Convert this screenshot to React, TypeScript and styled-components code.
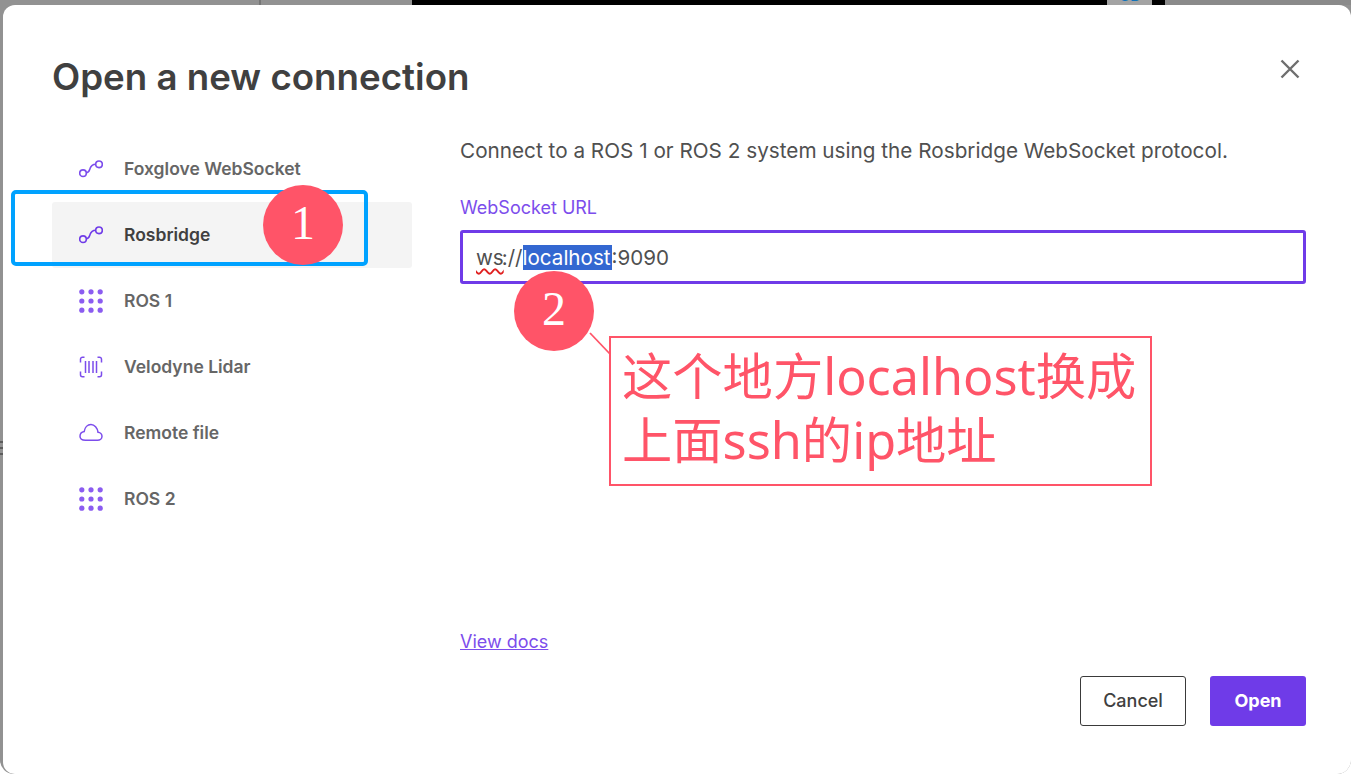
import React, { FC } from 'react';
import styled, { createGlobalStyle } from 'styled-components';

const GlobalStyle = createGlobalStyle`
    html, body {
        margin: 0;
        padding: 0;
        background: #fff;
    }

    * {
        box-sizing: border-box;
    }
`;

const ConnectionIcon: FC = () => (
    <svg width="24" height="24" viewBox="0 0 24 24" fill="none" stroke="currentColor" strokeWidth="1.6">
        <circle cx="4" cy="16.2" r="3.3" />
        <circle cx="20" cy="7.3" r="3.3" />
        <path d="M7.3 15.6C10 15.6 10.3 13.4 11 11.6C11.8 9.4 13.4 7.4 16.7 7.3" />
    </svg>
);

const DotsIcon: FC = () => (
    <svg width="24" height="24" viewBox="0 0 24 24" fill="#8b5cf0">
        {[2.8, 12, 21.2].map((y) =>
            [2.8, 12, 21.2].map((x) => <circle key={`${x}-${y}`} cx={x} cy={y} r="2.6" />)
        )}
    </svg>
);

const LidarIcon: FC = () => (
    <svg width="24" height="24" viewBox="0 0 24 24" fill="none" stroke="currentColor" strokeWidth="1.5">
        <path d="M5.5 2.2H3.5A2 2 0 0 0 1.5 4.2V7.5M18.5 2.2H20.5A2 2 0 0 1 22.5 4.2V7.5M5.5 21.8H3.5A2 2 0 0 1 1.5 19.8V16.5M18.5 21.8H20.5A2 2 0 0 0 22.5 19.8V16.5" />
        <path d="M6.5 6V18M10 6V18M14 6V18M17.5 6V18" />
    </svg>
);

const CloudIcon: FC = () => (
    <svg width="24" height="24" viewBox="0 0 24 24" fill="none" stroke="currentColor" strokeWidth="1.5">
        <path d="M6.5 19.2H18.5C21 19.2 23 17.5 23 15.2C23 13 21.2 11.3 19 11.2C18.4 7 15.5 3.5 12 3.5C8.5 3.5 5.8 6.5 5.2 10.5C2.8 11 1 12.8 1 15.2C1 17.5 3.2 19.2 6.5 19.2Z" />
    </svg>
);

const connections = [
    { name: 'Foxglove WebSocket', icon: <ConnectionIcon /> },
    { name: 'Rosbridge', icon: <ConnectionIcon />, active: true },
    { name: 'ROS 1', icon: <DotsIcon /> },
    { name: 'Velodyne Lidar', icon: <LidarIcon /> },
    { name: 'Remote file', icon: <CloudIcon /> },
    { name: 'ROS 2', icon: <DotsIcon /> },
];

const App: FC = () => (
    <Backdrop>
        <GlobalStyle />

        <TopStrip>
            <StripPiece $width={259} $color="#929292" />
            <StripPiece $width={2} $color="#767676" />
            <StripPiece $width={151} $color="#929292" />
            <StripPiece $width={695} $color="#000" />
            <StripPiece $width={45} $color="#a3a3a3"><StripLabel>3D</StripLabel></StripPiece>
            <StripPiece $width={13} $color="#000" />
            <StripPiece $width={186} $color="#8a8a8a" />
        </TopStrip>

        <EdgeTicks />

        <Dialog>
            <Header>
                <Title>Open a new connection</Title>
                <CloseButton aria-label="Close">
                    <svg width="20" height="20" viewBox="0 0 20 20" stroke="#6e6e6e" strokeWidth="2.4">
                        <path d="M1.5 1.5L18.5 18.5M18.5 1.5L1.5 18.5" />
                    </svg>
                </CloseButton>
            </Header>

            <Body>
                <Sidebar>
                    {connections.map((item) => (
                        <SidebarItem key={item.name} $active={item.active}>
                            {item.icon}
                            <span>{item.name}</span>
                        </SidebarItem>
                    ))}
                </Sidebar>

                <Panel>
                    <Description>
                        Connect to a ROS 1 or ROS 2 system using the Rosbridge WebSocket protocol.
                    </Description>
                    <FieldLabel>WebSocket URL</FieldLabel>
                    <UrlField>
                        <Misspelled>ws</Misspelled>://<Selected>localhost</Selected>:9090
                    </UrlField>

                    <DocsLink href="#">View docs</DocsLink>

                    <Actions>
                        <CancelButton>Cancel</CancelButton>
                        <OpenButton>Open</OpenButton>
                    </Actions>
                </Panel>
            </Body>
        </Dialog>

        <Highlight />
        <Marker $x={263} $y={185}>1</Marker>
        <Marker $x={514} $y={271}>2</Marker>
        <Leader width="24" height="24" viewBox="0 0 24 24">
            <path d="M2 2L22 23" stroke="#ff5468" strokeWidth="1.8" />
        </Leader>
        <Callout>这个地方localhost换成<br />上面ssh的ip地址</Callout>
    </Backdrop>
);

export default App;

const Backdrop = styled.div`
    position: relative;
    display: flex;
    flex-direction: column;
    height: 774px;
    overflow: hidden;
    padding-left: 3px;
    background: #929292;
    border-radius: 0 0 14px 14px;
    font-family: Inter, "Noto Sans", sans-serif;
`;

const TopStrip = styled.div`
    display: flex;
    flex: none;
    height: 5px;
    margin-left: -3px;
`;

const StripPiece = styled.div<{ $width: number; $color: string }>`
    flex: none;
    width: ${(p) => p.$width}px;
    height: 5px;
    overflow: hidden;
    background: ${(p) => p.$color};
`;

const StripLabel = styled.div`
    margin: -13px 0 0 13px;
    color: #1273b8;
    font-size: 16px;
    font-weight: 600;
    line-height: 16px;
`;

const EdgeTicks = styled.div`
    position: absolute;
    top: 441px;
    left: 0;
    width: 3px;
    height: 14px;
    background: repeating-linear-gradient(#5c5c5c 0 2px, transparent 2px 6px);
`;

const Dialog = styled.div`
    display: flex;
    flex: 1;
    flex-direction: column;
    min-height: 0;
    padding: 48px 45px 48px 49px;
    background: #fff;
    border-radius: 12px;
`;

const Header = styled.div`
    display: flex;
    flex: none;
    align-items: flex-start;
    justify-content: space-between;
    margin-bottom: 35px;
`;

const Title = styled.h1`
    margin: 0;
    color: #404040;
    font-size: 36.7px;
    font-weight: 600;
    line-height: 48px;
`;

const CloseButton = styled.button`
    display: flex;
    align-items: center;
    justify-content: center;
    width: 32px;
    height: 32px;
    padding: 0;
    background: none;
    border: 0;
`;

const Body = styled.div`
    display: flex;
    flex: 1;
    gap: 48px;
    min-height: 0;
`;

const Sidebar = styled.div`
    display: flex;
    flex: none;
    flex-direction: column;
    width: 360px;
`;

const SidebarItem = styled.div<{ $active?: boolean }>`
    display: flex;
    align-items: center;
    gap: 21px;
    height: 66px;
    padding-left: 27px;
    color: ${(p) => (p.$active ? '#6f3be8' : '#7c4dec')};
    background: ${(p) => (p.$active ? '#f4f4f4' : 'transparent')};
    border-radius: 3px;

    span {
        margin-bottom: 2px;
        color: ${(p) => (p.$active ? '#404040' : '#666')};
        font-size: 17.5px;
        font-weight: 600;
    }
`;

const Panel = styled.div`
    display: flex;
    flex: 1;
    flex-direction: column;
    min-width: 0;
`;

const Description = styled.p`
    margin: 0 0 30px;
    color: #505050;
    font-size: 20.73px;
    line-height: 30px;
`;

const FieldLabel = styled.label`
    margin-bottom: 10px;
    color: #7c4dec;
    font-size: 18px;
    line-height: 24px;
`;

const UrlField = styled.div`
    height: 54px;
    padding-left: 13px;
    color: #505050;
    font-size: 20.6px;
    line-height: 49px;
    border: 3px solid #6f3be8;
    border-radius: 3px;
`;

const Misspelled = styled.span`
    margin-right: -2px;
    text-decoration: underline wavy #e02020 1.5px;
    text-underline-offset: 3px;
`;

const Selected = styled.span`
    padding-right: 1px;
    color: #fff;
    background: #3367d1;
`;

const DocsLink = styled.a`
    align-self: flex-start;
    margin-top: auto;
    margin-bottom: 22px;
    color: #7c4dec;
    font-size: 18px;
    line-height: 24px;
`;

const Actions = styled.div`
    display: flex;
    justify-content: flex-end;
    gap: 24px;
`;

const CancelButton = styled.button`
    width: 106px;
    height: 50px;
    padding: 0 0 2px;
    color: #404040;
    font-family: inherit;
    font-size: 18px;
    font-weight: 500;
    background: #fff;
    border: 1.5px solid #3a3a3a;
    border-radius: 3px;
`;

const OpenButton = styled.button`
    width: 96px;
    height: 50px;
    padding: 0 0 2px;
    color: #fff;
    font-family: inherit;
    font-size: 18px;
    font-weight: 700;
    background: #6f3be8;
    border: 0;
    border-radius: 3px;
`;

const Highlight = styled.div`
    position: absolute;
    top: 190px;
    left: 11px;
    width: 357px;
    height: 76px;
    border: 4px solid #00a2ff;
    border-radius: 5px;
`;

const Marker = styled.div<{ $x: number; $y: number }>`
    position: absolute;
    top: ${(p) => p.$y}px;
    left: ${(p) => p.$x}px;
    display: flex;
    align-items: center;
    justify-content: center;
    width: 80px;
    height: 80px;
    padding-bottom: 5px;
    color: #fff;
    font-family: "Liberation Serif", serif;
    font-size: 48px;
    background: #ff5468;
    border-radius: 50%;
`;

const Leader = styled.svg`
    position: absolute;
    top: 331px;
    left: 588px;
`;

const Callout = styled.div`
    position: absolute;
    top: 336px;
    left: 609px;
    width: 543px;
    height: 150px;
    padding: 6px 11px;
    color: #ff5468;
    font-family: "Noto Sans", "Noto Sans CJK SC", sans-serif;
    font-size: 50.3px;
    line-height: 64px;
    white-space: nowrap;
    background: #fff;
    border: 2px solid #ff5468;
`;
